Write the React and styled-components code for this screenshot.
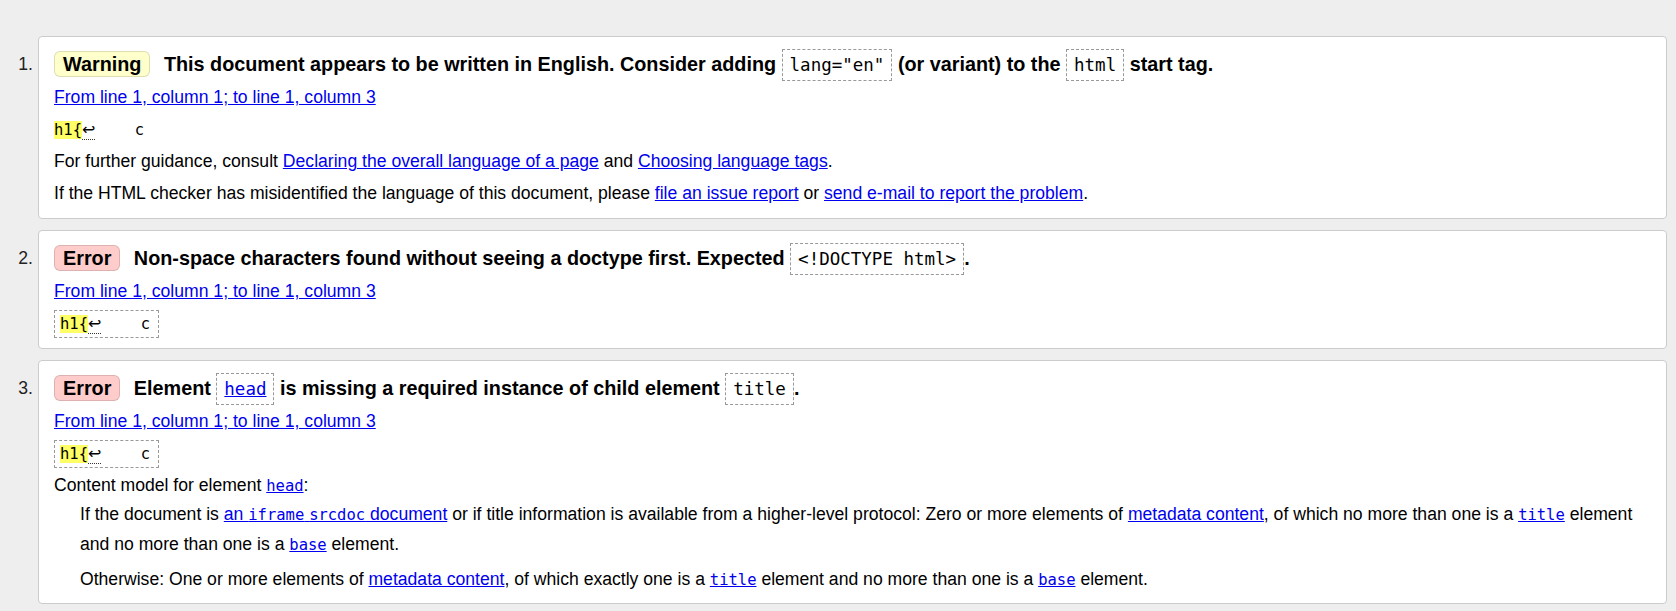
import React from "react";
import styled, { createGlobalStyle, css } from "styled-components";

const GlobalStyle = createGlobalStyle`
  html, body {
    margin: 0;
    padding: 0;
    background: #eeeeee;
  }
  body {
    font-family: "Liberation Sans", Arial, sans-serif;
    color: #000;
  }
`;

const Page = styled.main`
  padding: 36px 9px 9px 0;
`;

const List = styled.ol`
  list-style: none;
  margin: 0;
  padding: 0;
  display: flex;
  flex-direction: column;
  gap: 11px;
`;

const Item = styled.li`
  display: flex;
  align-items: flex-start;
`;

const Num = styled.span`
  flex: 0 0 33px;
  margin-right: 5px;
  padding-top: 15px;
  text-align: right;
  font-size: 17.6px;
  line-height: 26px;
  color: #222;
`;

const Card = styled.div`
  flex: 1;
  min-width: 0;
  background: #fff;
  border: 1px solid #cccccc;
  border-radius: 4px;
  padding: 14px 14px 13px 15px;
`;

const Heading = styled.p`
  margin: 0;
  font-weight: bold;
  font-size: 19.8px;
  line-height: 26px;
`;

const Badge = styled.strong`
  display: inline-block;
  padding: 0 8px;
  margin-right: 8px;
  border-radius: 6px;
  line-height: 24px;
  border: 1px solid rgba(0, 0, 0, 0.13);
  background: ${(p) => (p.$kind === "error" ? "#ffcccc" : "#ffffcc")};
`;

const mono = css`
  font-family: "DejaVu Sans Mono", "Liberation Mono", monospace;
  font-weight: normal;
  line-height: 1;
`;

const HCode = styled.code`
  ${mono};
  font-size: 17.5px;
  padding: 5px 7px;
  border: 1px dashed #999;
`;

const Para = styled.p`
  margin: 8px 0 0;
  font-size: 17.6px;
  line-height: 24px;
`;

const Link = styled.a`
  color: #0000ee;
  text-decoration: underline;
`;

const Code = styled.code`
  ${mono};
  font-size: 15.5px;
`;

const ExtractCode = styled.code`
  ${mono};
  font-size: 15.5px;
  white-space: pre;
  ${(p) =>
    p.$boxed &&
    css`
      padding: 4px 8px 4px 5px;
      border: 1px dashed #999;
    `}
`;

const Mark = styled.b`
  font-weight: normal;
  background: #ffff66;
`;

const Lf = styled.span`
  font-family: "DejaVu Sans", sans-serif;
  font-size: 16px;
  margin-right: 2px;
  border-bottom: 1px dotted #333;
`;

const Model = styled.div`
  margin: 2px 0 -4px 26px;
`;

const ModelPara = styled.p`
  margin: 5px 0 0;
  font-size: 17.6px;
  line-height: 30px;
  &:first-child {
    margin-top: 0;
  }
`;

const Extract = ({ boxed }) => (
  <Para>
    <ExtractCode $boxed={boxed}>
      <Mark>h1{"{"}</Mark>
      <Lf>↩</Lf>
      {"    c"}
    </ExtractCode>
  </Para>
);

const Location = () => (
  <Para>
    <Link href="#">From line 1, column 1; to line 1, column 3</Link>
  </Para>
);

export default function App() {
  return (
    <>
      <GlobalStyle />
      <Page>
        <List>
          <Item>
            <Num>1.</Num>
            <Card>
              <Heading>
                <Badge $kind="warning">Warning</Badge> This document appears to
                be written in English. Consider adding <HCode>lang="en"</HCode>{" "}
                (or variant) to the <HCode>html</HCode> start tag.
              </Heading>
              <Location />
              <Extract />
              <Para>
                For further guidance, consult{" "}
                <Link href="#">Declaring the overall language of a page</Link>{" "}
                and <Link href="#">Choosing language tags</Link>.
              </Para>
              <Para>
                If the HTML checker has misidentified the language of this
                document, please <Link href="#">file an issue report</Link> or{" "}
                <Link href="#">send e-mail to report the problem</Link>.
              </Para>
            </Card>
          </Item>
          <Item>
            <Num>2.</Num>
            <Card>
              <Heading>
                <Badge $kind="error">Error</Badge> Non-space characters found
                without seeing a doctype first. Expected{" "}
                <HCode>{"<!DOCTYPE html>"}</HCode>.
              </Heading>
              <Location />
              <Extract boxed />
            </Card>
          </Item>
          <Item>
            <Num>3.</Num>
            <Card>
              <Heading>
                <Badge $kind="error">Error</Badge> Element{" "}
                <HCode>
                  <Link href="#">head</Link>
                </HCode>{" "}
                is missing a required instance of child element{" "}
                <HCode>title</HCode>.
              </Heading>
              <Location />
              <Extract boxed />
              <Para>
                Content model for element{" "}
                <Link href="#">
                  <Code>head</Code>
                </Link>
                :
              </Para>
              <Model>
                <ModelPara>
                  If the document is{" "}
                  <Link href="#">
                    an <Code>iframe</Code> <Code>srcdoc</Code> document
                  </Link>{" "}
                  or if title information is available from a higher-level
                  protocol: Zero or more elements of{" "}
                  <Link href="#">metadata content</Link>, of which no more than
                  one is a{" "}
                  <Link href="#">
                    <Code>title</Code>
                  </Link>{" "}
                  element and no more than one is a{" "}
                  <Link href="#">
                    <Code>base</Code>
                  </Link>{" "}
                  element.
                </ModelPara>
                <ModelPara>
                  Otherwise: One or more elements of{" "}
                  <Link href="#">metadata content</Link>, of which exactly one
                  is a{" "}
                  <Link href="#">
                    <Code>title</Code>
                  </Link>{" "}
                  element and no more than one is a{" "}
                  <Link href="#">
                    <Code>base</Code>
                  </Link>{" "}
                  element.
                </ModelPara>
              </Model>
            </Card>
          </Item>
        </List>
      </Page>
    </>
  );
}
